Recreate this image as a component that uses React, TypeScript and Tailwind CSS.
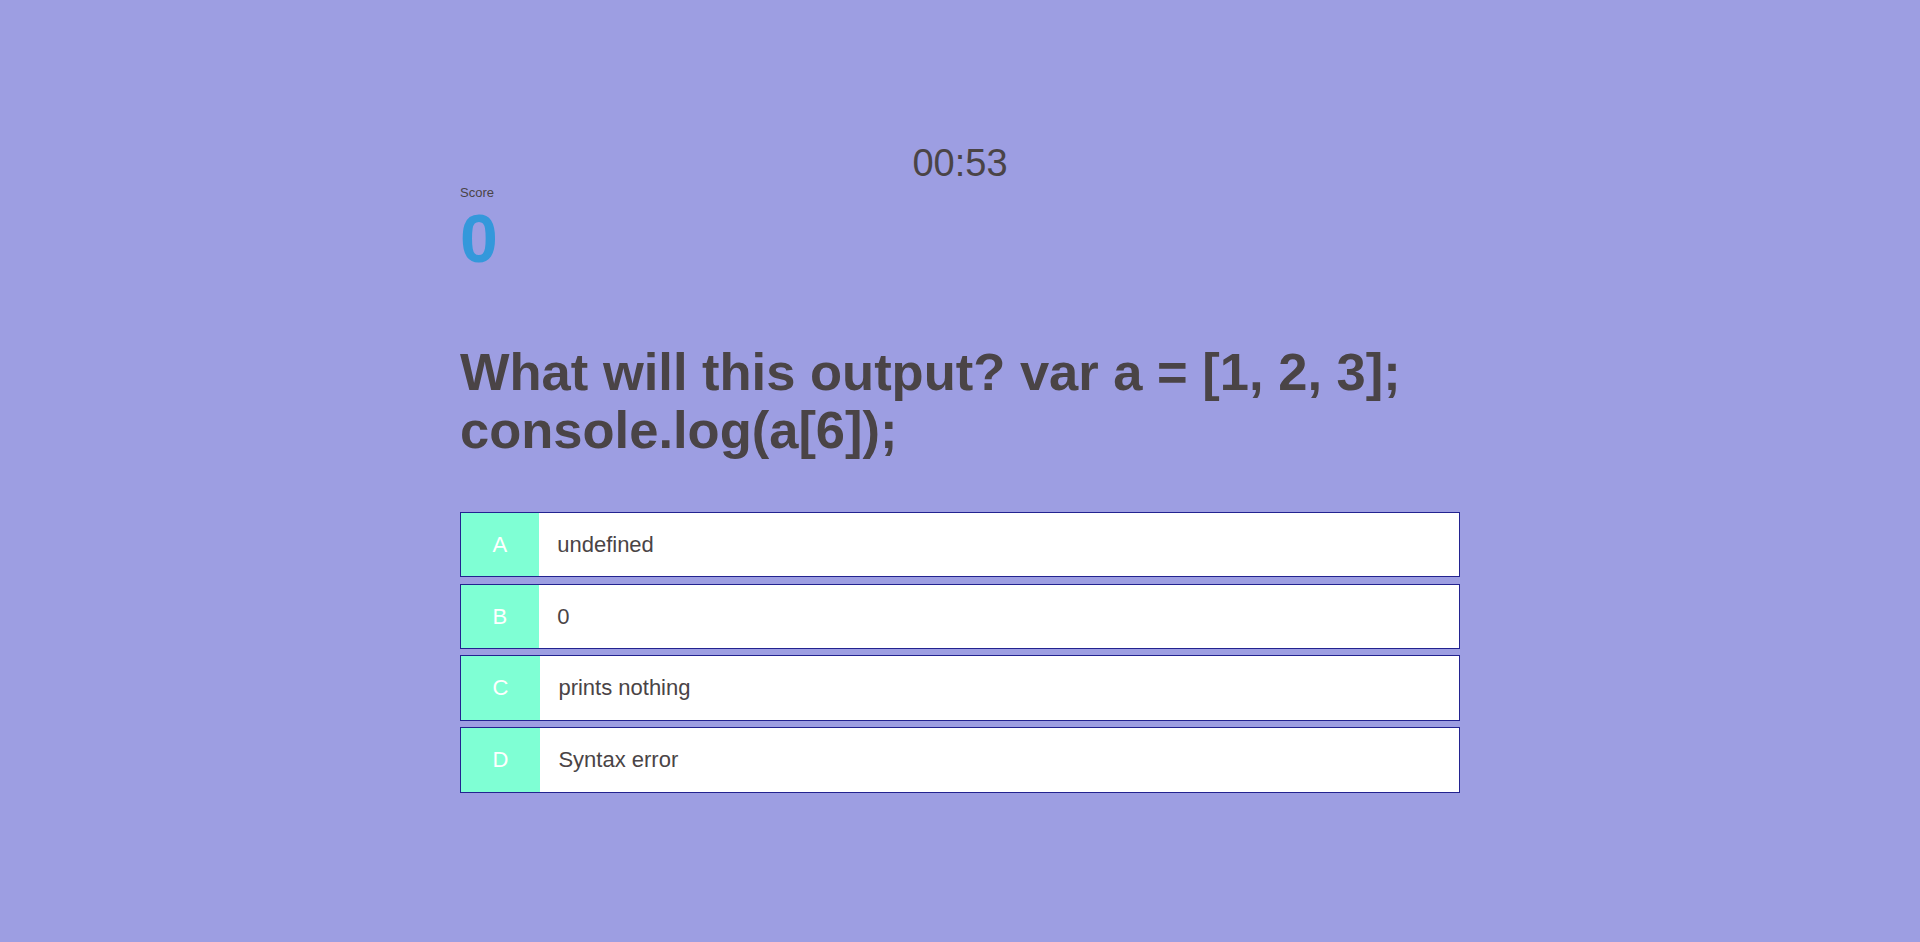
import React, { useState } from 'react';

type Choice = { key: string; text: string };

const choices: Choice[] = [
  { key: 'A', text: 'undefined' },
  { key: 'B', text: '0' },
  { key: 'C', text: 'prints nothing' },
  { key: 'D', text: 'Syntax error' },
];

const App = () => {
  const [score] = useState(0);
  const [picked, setPicked] = useState<string | null>(null);

  return (
    <div className="min-h-screen w-full bg-[#9d9ee2] font-['Liberation_Sans',Arial,sans-serif] text-[#4a4446]">
      <div className="mx-auto w-[1000px] pt-[142px]">
        <div className="text-center text-[38px] leading-[1.15]">00:53</div>

        <div>
          <p className="text-[13px] leading-[1.15]">Score</p>
          <p className="mt-[3px] text-[68px] font-bold leading-none text-[#3498db]">{score}</p>
        </div>

        <h2 className="mt-[71px] text-[52.5px] font-bold leading-[58px]">
          What will this output? var a = [1, 2, 3]; console.log(a[6]);
        </h2>

        <div className="mt-[53px] flex flex-col gap-[6.6px]">
          {choices.map((c) => (
            <button
              key={c.key}
              onClick={() => setPicked(c.key)}
              className="flex w-full cursor-pointer border border-[#232390] bg-white text-left text-[22px] leading-[1.15]"
            >
              <span className="flex items-center bg-[#7fffd4] px-[31.5px] py-[19px] text-white">{c.key}</span>
              <span className={picked === c.key ? 'flex-1 pl-[18.5px] pr-5 py-[19px] bg-gray-100' : 'flex-1 pl-[18.5px] pr-5 py-[19px]'}>
                {c.text}
              </span>
            </button>
          ))}
        </div>
      </div>
    </div>
  );
};

export default App;
